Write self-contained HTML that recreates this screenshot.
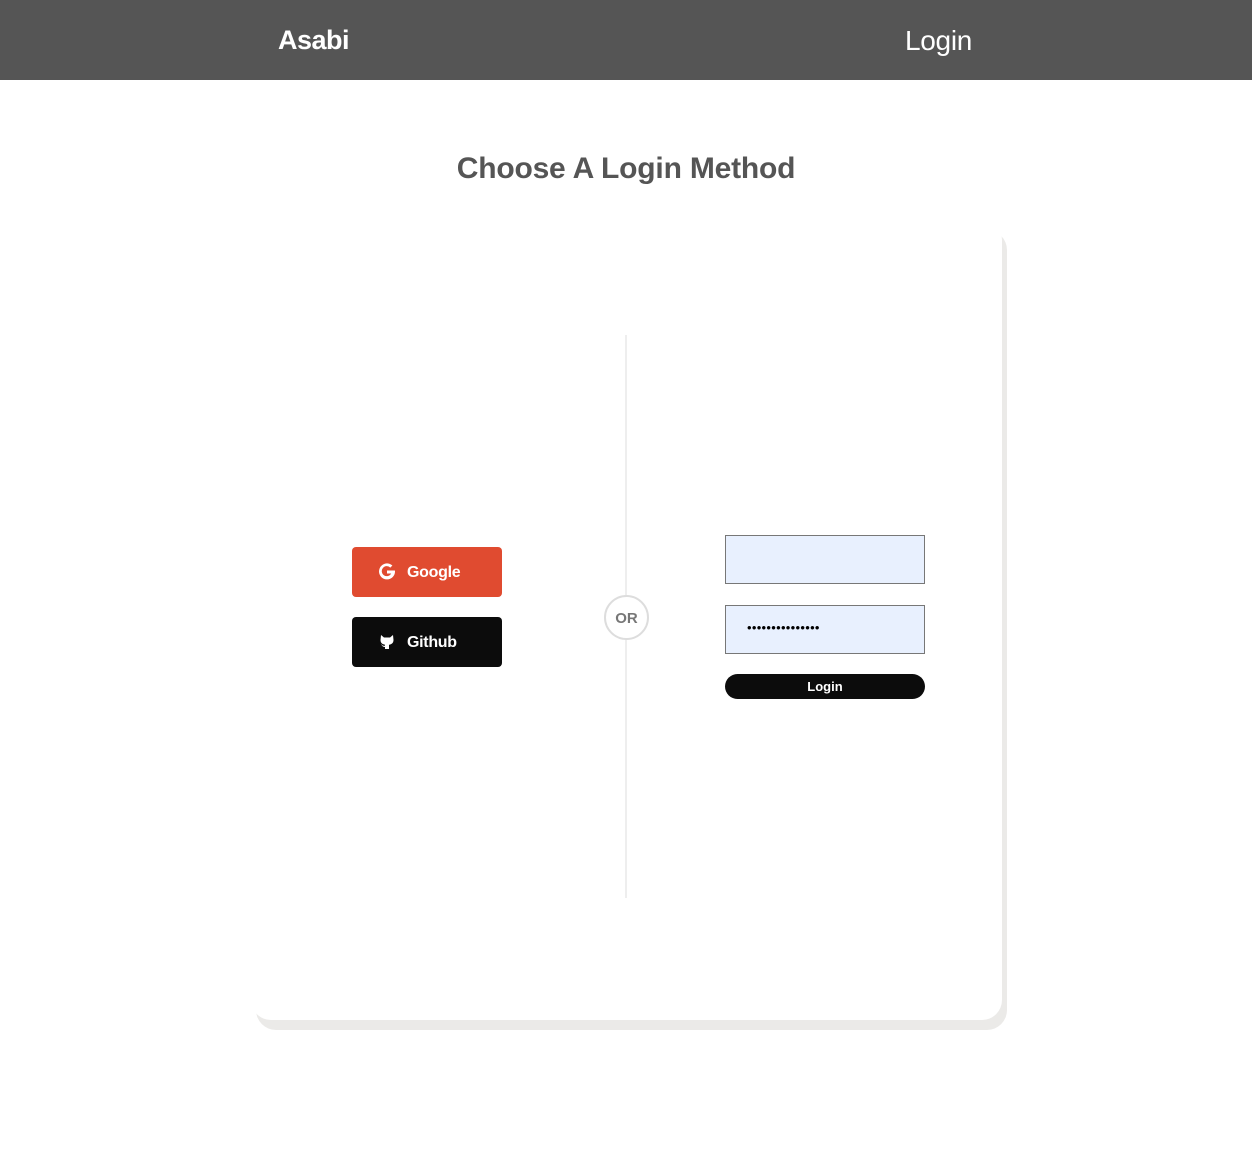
<!DOCTYPE html>
<html><head><meta charset="utf-8"><style>
*{box-sizing:border-box;margin:0;padding:0}
body{width:1252px;height:1154px;background:#fff;font-family:"Liberation Sans",Arial,sans-serif;position:relative;overflow:hidden}
.nav{position:absolute;left:0;top:0;width:1252px;height:80px;background:#555}
.nav .brand{position:absolute;left:278px;top:25px;color:#fff;font-weight:bold;font-size:27px;letter-spacing:-0.5px}
.nav .login{position:absolute;left:905px;top:25px;color:#fff;font-size:28px;letter-spacing:-0.3px}
h1{position:absolute;left:0;width:1252px;top:152px;text-align:center;color:#555;font-size:30px;font-weight:bold;letter-spacing:-0.2px}
.card{position:absolute;left:251px;top:220px;width:751px;height:800px;background:#fff;border-radius:20px;box-shadow:5px 10px 0 #ebeae8}
.line{position:absolute;left:625px;top:335px;width:2px;height:563px;background:#eee}
.or{position:absolute;left:604px;top:595px;width:45px;height:45px;border:2px solid #ddd;border-radius:50%;background:#fff;color:#777;font-weight:bold;font-size:15px;text-align:center;line-height:43px}
.btn{position:absolute;left:352px;width:150px;height:50px;border-radius:4px;color:#fff;font-weight:bold;font-size:16px;letter-spacing:-0.3px}
.btn span{position:absolute;left:55px;top:17px}
.btn svg{position:absolute;left:25px;top:15px}
.inp{position:absolute;left:725px;width:200px;height:49px;background:#e8f0fe;border:1px solid #777}
.lb{position:absolute;left:725px;top:674px;width:200px;height:25px;border-radius:13px;background:#0c0c0c;color:#fff;font-weight:bold;font-size:13px;text-align:center;line-height:25px}
</style></head><body>
<div class="nav"><div class="brand">Asabi</div><div class="login">Login</div></div>
<h1>Choose A Login Method</h1>
<div class="card"></div>
<div class="line"></div>
<div class="or">OR</div>
<div class="btn" style="top:547px;background:#e04b30"><svg width="20" height="20" viewBox="0 0 20 20"><path d="M17 8.5H10v3h4.2A5 5 0 1 1 13.3 5.6l2.1-2.1A8 8 0 1 0 18 10c0-.5 0-1-.1-1.5z" fill="#fff"/></svg><span>Google</span></div>
<div class="btn" style="top:617px;background:#0c0c0c"><svg width="20" height="20" viewBox="0 0 20 20"><path d="M4 3l3 2.5h6L16 3l.5 5c0 3-2 4.5-4.5 4.7V17H8v-2c-1.5 0-2.5-.5-3-1.5L4 12.5c1 0 1.5 1 2 1.2h2v-1C5.5 12.5 3.5 11 3.5 8z" fill="#fff"/></svg><span>Github</span></div>
<div class="inp" style="top:535px"></div>
<div class="inp" style="top:605px"><span style="position:absolute;left:21px;top:14px;font-size:13px;letter-spacing:0.3px">•••••••••••••••</span></div>
<div class="lb">Login</div>
</body></html>
